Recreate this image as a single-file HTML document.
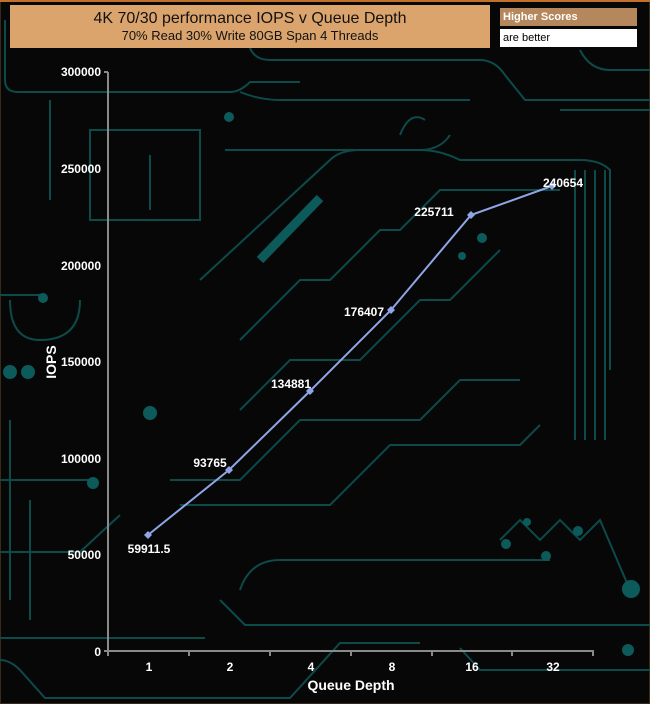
<!DOCTYPE html>
<html><head><style>
body{margin:0;background:#000;}
#c{position:relative;width:650px;height:704px;background:#070707;overflow:hidden;font-family:"Liberation Sans",sans-serif;}
</style></head><body><div id="c">
<svg width="650" height="704" style="position:absolute;left:0;top:0">
<rect x="0.5" y="0.5" width="649" height="703" fill="none" stroke="#3a2a18"/>
<line x1="0" y1="1" x2="650" y2="1" stroke="#c0702a" stroke-width="2"/>
<g fill="none" stroke="#0d4a4a" stroke-width="2">
<path d="M5 20 V80 Q5 92 18 92 H230 Q240 92 250 82 H300"/>
<path d="M250 48 Q255 60 270 60 H480 Q495 60 505 75 L525 100 H650"/>
<path d="M580 50 Q590 70 610 70 H650"/>
<path d="M560 110 H650"/>
<path d="M240 92 Q260 100 280 100 H470"/>
<path d="M90 130 H200 V220 H90 Z"/>
<path d="M150 155 V210"/>
<path d="M50 100 V200"/>
<path d="M0 295 H40"/>
<path d="M10 300 Q10 340 40 340 Q80 340 80 300"/>
<path d="M225 150 H420 Q440 150 450 135 M400 135 Q410 110 425 120"/>
<path d="M200 280 L330 160 Q340 150 360 150 H420 Q440 150 460 160 H580 Q600 160 610 170 V370"/>
<path d="M240 340 L300 280 H330 L380 230 H400 L440 190 H560"/>
<path d="M240 410 L290 360 H360 L420 300 H450 L500 250"/>
<path d="M170 480 H240 L300 420 H420 L460 380 H520"/>
<path d="M0 480 H90"/>
<path d="M180 505 H330 L390 445 H520 L540 425"/>
<path d="M0 552 H80 L120 515"/>
<path d="M220 600 L245 625 H650"/>
<path d="M0 638 H205"/>
<path d="M0 660 Q10 660 20 670 L45 698 H290 L340 643 H420"/>
<path d="M460 648 L480 670 H650"/>
<path d="M240 590 Q250 560 280 560 H550"/>
<path d="M500 540 L520 520 L540 540 L560 520 L580 540 L600 520 L630 590"/>
<path d="M575 170 V440 M585 170 V440 M595 170 V440 M605 170 V440"/>
<path d="M10 420 V600 M30 500 V620"/>
</g>
<g fill="#0d5a5a">
<circle cx="43" cy="298" r="5"/><circle cx="93" cy="483" r="6"/><circle cx="150" cy="413" r="7"/>
<circle cx="229" cy="117" r="5"/><circle cx="631" cy="589" r="9"/><circle cx="628" cy="650" r="6"/>
<circle cx="506" cy="544" r="5"/><circle cx="527" cy="522" r="4"/><circle cx="546" cy="556" r="5"/><circle cx="578" cy="531" r="5"/>
<circle cx="482" cy="238" r="5"/><circle cx="462" cy="256" r="4"/>
<circle cx="10" cy="372" r="7"/><circle cx="28" cy="372" r="7"/>
</g>
<path d="M260 260 L320 198" stroke="#0d5a5a" stroke-width="9"/>
<!-- axes -->
<g stroke="#8a8a8a" stroke-width="2">
<line x1="108" y1="72" x2="108" y2="656"/>
<line x1="104" y1="651" x2="594" y2="651"/>
<line x1="104" y1="72" x2="108" y2="72"/>
<line x1="189" y1="651" x2="189" y2="656"/><line x1="270" y1="651" x2="270" y2="656"/>
<line x1="351" y1="651" x2="351" y2="656"/><line x1="432" y1="651" x2="432" y2="656"/>
<line x1="512" y1="651" x2="512" y2="656"/><line x1="593" y1="651" x2="593" y2="656"/>
</g>
<g fill="#fff" font-family="Liberation Sans" font-weight="bold" font-size="12" text-anchor="end">
<text x="101" y="76">300000</text><text x="101" y="173">250000</text><text x="101" y="270">200000</text>
<text x="101" y="366">150000</text><text x="101" y="463">100000</text><text x="101" y="559">50000</text>
<text x="101" y="656">0</text>
</g>
<g fill="#fff" font-family="Liberation Sans" font-weight="bold" font-size="12" text-anchor="middle">
<text x="149" y="671">1</text><text x="230" y="671">2</text><text x="311" y="671">4</text>
<text x="392" y="671">8</text><text x="472" y="671">16</text><text x="553" y="671">32</text>
<text x="351" y="690" font-size="14">Queue Depth</text>
</g>
<text x="56" y="362" fill="#fff" font-weight="bold" font-size="14" font-family="Liberation Sans" text-anchor="middle" transform="rotate(-90 56 362)">IOPS</text>
<polyline points="148,535 229,470 310,391 391,310 471,215 552,186" fill="none" stroke="#8fa6e6" stroke-width="2"/>
<g fill="#8fa6e6">
<path d="M148 531 l4 4 -4 4 -4 -4z"/><path d="M229 466 l4 4 -4 4 -4 -4z"/><path d="M310 387 l4 4 -4 4 -4 -4z"/>
<path d="M391 306 l4 4 -4 4 -4 -4z"/><path d="M471 211 l4 4 -4 4 -4 -4z"/><path d="M552 182 l4 4 -4 4 -4 -4z"/>
</g>
<g fill="#fff" font-family="Liberation Sans" font-weight="bold" font-size="12" text-anchor="middle">
<text x="149" y="553">59911.5</text><text x="210" y="467">93765</text><text x="291" y="388">134881</text>
<text x="364" y="316">176407</text><text x="434" y="216">225711</text><text x="563" y="187">240654</text>
</g>
</svg>
<div style="position:absolute;left:10px;top:5px;width:480px;height:43px;background:#dca46d;text-align:center;color:#111;">
<div style="font-size:16px;margin-top:4px;line-height:19px">4K 70/30 performance IOPS v Queue Depth</div>
<div style="font-size:13px;line-height:16px">70% Read 30% Write 80GB Span 4 Threads</div></div>
<div style="position:absolute;left:500px;top:8px;width:137px;height:18px;background:#b5875d;color:#fff;font-size:11px;font-weight:bold;line-height:18px;padding-left:3px;box-sizing:border-box">Higher Scores</div>
<div style="position:absolute;left:500px;top:29px;width:137px;height:18px;background:#fff;color:#000;font-size:11px;line-height:18px;padding-left:3px;box-sizing:border-box">are better</div>
</div></body></html>
